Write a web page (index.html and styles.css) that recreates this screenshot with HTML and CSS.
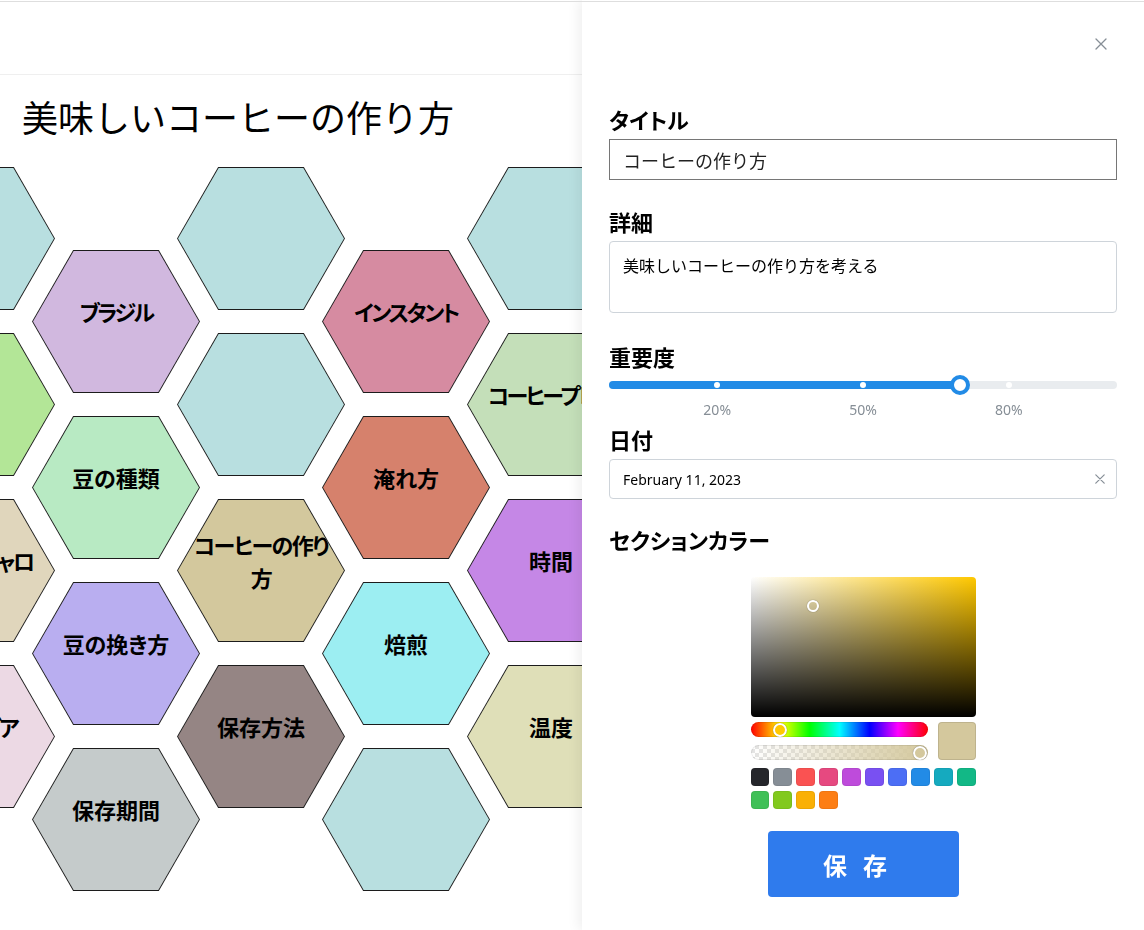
FILE: index.html
```html
<!DOCTYPE html>
<html lang="ja">
<head>
<meta charset="utf-8">
<title>美味しいコーヒーの作り方</title>
<link rel="stylesheet" href="styles.css">
</head>
<body>
<div class="topline"></div>
<div class="app">
  <header class="appbar"></header>
  <main class="board">
    <h1 class="board-title">美味しいコーヒーの作り方</h1>
    <div class="hexgrid">
      <div class="hexcol">
        <div class="hex"><div class="hex-face h-teal"></div></div>
        <div class="hex"><div class="hex-face h-green kana">モカ</div></div>
        <div class="hex"><div class="hex-face h-beige kana">キリマンジャロ</div></div>
        <div class="hex"><div class="hex-face h-pink kana">コロンビア</div></div>
      </div>
      <div class="hexcol shift">
        <div class="hex"><div class="hex-face h-lavender kana">ブラジル</div></div>
        <div class="hex"><div class="hex-face h-mint">豆の種類</div></div>
        <div class="hex"><div class="hex-face h-periwinkle">豆の挽き方</div></div>
        <div class="hex"><div class="hex-face h-gray">保存期間</div></div>
      </div>
      <div class="hexcol">
        <div class="hex"><div class="hex-face h-teal"></div></div>
        <div class="hex"><div class="hex-face h-teal"></div></div>
        <div class="hex"><div class="hex-face h-khaki mixed">コーヒーの作り<br>方</div></div>
        <div class="hex"><div class="hex-face h-taupe">保存方法</div></div>
      </div>
      <div class="hexcol shift">
        <div class="hex"><div class="hex-face h-rose kana">インスタント</div></div>
        <div class="hex"><div class="hex-face h-terracotta">淹れ方</div></div>
        <div class="hex"><div class="hex-face h-cyan">焙煎</div></div>
        <div class="hex"><div class="hex-face h-teal"></div></div>
      </div>
      <div class="hexcol">
        <div class="hex"><div class="hex-face h-teal"></div></div>
        <div class="hex"><div class="hex-face h-sage kana">コーヒープレス</div></div>
        <div class="hex"><div class="hex-face h-purple">時間</div></div>
        <div class="hex"><div class="hex-face h-straw">温度</div></div>
      </div>
    </div>
  </main>
</div>

<aside class="drawer">
  <div class="drawer-head">
    <button class="close-btn" type="button" aria-label="閉じる">
      <svg width="12" height="12" viewBox="0 0 12 12"><path d="M1 1L11 11M11 1L1 11" stroke="#868e96" stroke-width="1.3" stroke-linecap="round" fill="none"/></svg>
    </button>
  </div>

  <div class="field field-title">
    <label class="field-label">タイトル</label>
    <input class="plain-input" type="text" value="コーヒーの作り方">
  </div>

  <div class="field field-desc">
    <label class="field-label">詳細</label>
    <textarea class="textarea">美味しいコーヒーの作り方を考える</textarea>
  </div>

  <div class="field field-importance">
    <label class="field-label">重要度</label>
    <div class="slider">
      <div class="slider-track"></div>
      <div class="slider-fill"></div>
      <span class="slider-mark" style="left:20%"></span>
      <span class="slider-mark" style="left:50%"></span>
      <span class="slider-mark" style="left:80%"></span>
      <span class="slider-thumb" style="left:70%"></span>
    </div>
    <div class="slider-labels">
      <span class="slider-label" style="left:20%">20%</span>
      <span class="slider-label" style="left:50%">50%</span>
      <span class="slider-label" style="left:80%">80%</span>
    </div>
  </div>

  <div class="field field-date">
    <label class="field-label">日付</label>
    <div class="date-wrap">
      <input class="date-input" type="text" value="February 11, 2023">
      <svg class="date-clear" width="10" height="10" viewBox="0 0 10 10"><path d="M0.8 0.8L9.2 9.2M9.2 0.8L0.8 9.2" stroke="#868e96" stroke-width="1.2" stroke-linecap="round" fill="none"/></svg>
    </div>
  </div>

  <div class="field field-color">
    <label class="field-label">セクションカラー</label>
  </div>

  <div class="picker">
    <div class="sat"><span class="sat-thumb"></span></div>
    <div class="picker-row">
      <div class="picker-sliders">
        <div class="hue"><span class="knob knob-hue"></span></div>
        <div class="alpha"><span class="knob knob-alpha"></span></div>
      </div>
      <div class="preview"></div>
    </div>
    <div class="swatches">
      <span class="swatch s-dark"></span>
      <span class="swatch s-gray"></span>
      <span class="swatch s-red"></span>
      <span class="swatch s-pink"></span>
      <span class="swatch s-grape"></span>
      <span class="swatch s-violet"></span>
      <span class="swatch s-indigo"></span>
      <span class="swatch s-blue"></span>
      <span class="swatch s-cyan"></span>
      <span class="swatch s-teal"></span>
      <span class="swatch s-green"></span>
      <span class="swatch s-lime"></span>
      <span class="swatch s-yellow"></span>
      <span class="swatch s-orange"></span>
    </div>
  </div>

  <button class="save-btn" type="button">保存</button>
</aside>
</body>
</html>
```

FILE: styles.css
```css
* { box-sizing: border-box; }

html, body {
  margin: 0;
  height: 100%;
}

body {
  font-family: "Noto Sans", "Noto Sans CJK JP", sans-serif;
  color: #000;
  background: #fff;
  overflow: hidden;
}

.topline {
  position: fixed;
  top: 1px;
  left: 0;
  right: 0;
  height: 1px;
  background: #dedede;
  z-index: 20;
}

.app {
  height: 930px;
  overflow: hidden;
}

.appbar {
  height: 75px;
  border-bottom: 1px solid #efefef;
}

.board-title {
  margin: 15px 0 0;
  padding-left: 22px;
  font: 400 36px/52px "Noto Sans CJK JP", sans-serif;
  color: #000;
}

/* ---------- hex grid ---------- */
.hexgrid {
  display: flex;
  align-items: flex-start;
  margin: 25px 0 0 -113px;
}

.hexcol {
  display: flex;
  flex-direction: column;
  gap: 23px;
  flex-shrink: 0;
}

.hexcol + .hexcol { margin-left: -23px; }

.hexcol.shift { margin-top: 83px; }

.hex {
  width: 168px;
  height: 143px;
  padding: 1px;
  background: #1c1c1c;
  clip-path: polygon(24.5% 0, 75.5% 0, 100% 50%, 75.5% 100%, 24.5% 100%, 0 50%);
}

.hex-face {
  height: 100%;
  clip-path: polygon(24.5% 0, 75.5% 0, 100% 50%, 75.5% 100%, 24.5% 100%, 0 50%);
  display: flex;
  align-items: center;
  justify-content: center;
  padding: 0 10px 20px;
  text-align: center;
  white-space: nowrap;
  font: 700 22px/33px "Noto Sans CJK JP", sans-serif;
  font-feature-settings: "palt";
  color: #000;
}

.hex-face.kana { letter-spacing: -2.5px; }
.hex-face.mixed { letter-spacing: -1.5px; }

.h-teal { background: #b8dfe0; }
.h-green { background: #b3e697; }
.h-beige { background: #e0d6bc; }
.h-pink { background: #ecd9e4; }
.h-lavender { background: #d1b8df; }
.h-mint { background: #b8eac3; }
.h-periwinkle { background: #b9aef0; }
.h-gray { background: #c5cbcb; }
.h-khaki { background: #d3c89d; }
.h-taupe { background: #958584; }
.h-rose { background: #d68ba1; }
.h-terracotta { background: #d6816c; }
.h-cyan { background: #9ceef2; }
.h-sage { background: #c4dfb9; }
.h-purple { background: #c587e6; }
.h-straw { background: #dfdfb8; }

/* ---------- drawer ---------- */
.drawer {
  position: fixed;
  top: 0;
  right: 0;
  width: 562px;
  height: 100%;
  background: #fff;
  box-shadow: -3px 0 12px rgba(0, 0, 0, 0.07);
  padding: 28px 27px 0;
  display: flex;
  flex-direction: column;
  z-index: 10;
}

.drawer-head {
  display: flex;
  justify-content: flex-end;
  height: 32px;
}

.close-btn {
  width: 32px;
  height: 32px;
  padding: 0;
  border: 0;
  background: none;
  display: flex;
  align-items: center;
  justify-content: center;
}

.field { display: flex; flex-direction: column; }

.field-label {
  display: block;
  margin: 0 0 5px;
  font: 700 22px/30px "Noto Sans CJK JP", sans-serif;
  font-feature-settings: "palt";
  color: #000;
}

.field-title { margin-top: 44px; }
.field-desc { margin-top: 26px; }
.field-importance { margin-top: 28px; }
.field-importance .field-label { margin: 0; }
.field-date { margin-top: 4px; }
.field-color { margin-top: 25px; }
.field-color .field-label { margin: 0; }

.plain-input {
  height: 41px;
  width: 100%;
  margin: 0;
  border: 1px solid #767676;
  border-radius: 0;
  padding: 0 13px;
  font: 400 18px "Noto Sans CJK JP", sans-serif;
  color: #222;
  background: #fff;
  outline: none;
}

.textarea {
  display: block;
  height: 72px;
  width: 100%;
  margin: 0;
  border: 1px solid #ced4da;
  border-radius: 4px;
  padding: 11px 13px;
  font: 400 16px/1.55 "Noto Sans CJK JP", sans-serif;
  color: #000;
  resize: none;
  outline: none;
}

/* slider */
.slider {
  position: relative;
  height: 28px;
  margin: 0 11px;
}

.slider-track {
  position: absolute;
  top: 10px;
  left: -11px;
  right: -11px;
  height: 8px;
  border-radius: 4px;
  background: #e9ecef;
}

.slider-fill {
  position: absolute;
  top: 10px;
  left: -11px;
  width: calc(70% + 11px);
  height: 8px;
  border-radius: 4px 0 0 4px;
  background: #228be6;
}

.slider-mark {
  position: absolute;
  top: 11px;
  width: 6px;
  height: 6px;
  margin-left: -3px;
  border-radius: 50%;
  background: #fff;
}

.slider-thumb {
  position: absolute;
  top: 4px;
  width: 20px;
  height: 20px;
  margin-left: -10px;
  border: 4px solid #228be6;
  border-radius: 50%;
  background: #fff;
}

.slider-labels {
  position: relative;
  height: 20px;
  margin: 1px 11px 0;
}

.slider-label {
  position: absolute;
  top: 0;
  transform: translateX(-50%);
  font: 400 14px/20px "Noto Sans", sans-serif;
  color: #868e96;
}

/* date */
.date-wrap { position: relative; }

.date-input {
  display: block;
  width: 100%;
  height: 40px;
  margin: 0;
  border: 1px solid #ced4da;
  border-radius: 4px;
  padding: 0 13px;
  font: 400 14px "Noto Sans", sans-serif;
  color: #000;
  outline: none;
}

.date-clear {
  position: absolute;
  right: 12px;
  top: 15px;
}

/* color picker */
.picker {
  width: 225px;
  align-self: center;
  margin-top: 23px;
}

.sat {
  position: relative;
  height: 140px;
  border-radius: 4px;
  background:
    linear-gradient(to top, #000, rgba(0, 0, 0, 0)),
    linear-gradient(to right, #fff, #ffc800);
}

.sat-thumb {
  position: absolute;
  left: 56px;
  top: 23px;
  width: 12px;
  height: 12px;
  border: 2px solid #fff;
  border-radius: 50%;
  box-shadow: 0 0 1px rgba(0, 0, 0, 0.6);
}

.picker-row {
  display: flex;
  gap: 10px;
  margin-top: 5px;
}

.picker-sliders {
  flex: 1;
  display: flex;
  flex-direction: column;
  gap: 8px;
}

.hue,
.alpha {
  position: relative;
  height: 15px;
  border-radius: 8px;
  box-shadow: inset 0 0 0 1px rgba(0, 0, 0, 0.08);
}

.hue {
  background: linear-gradient(to right, #f00 0%, #ff0 17%, #0f0 33%, #0ff 50%, #00f 67%, #f0f 83%, #f00 100%);
}

.alpha {
  background:
    linear-gradient(to right, rgba(212, 200, 157, 0), #d4c89d),
    repeating-conic-gradient(#e4e4e4 0 25%, #fff 0 50%) 0 0 / 8px 8px;
}

.knob {
  position: absolute;
  top: 0.5px;
  width: 14px;
  height: 14px;
  border: 2px solid #fff;
  border-radius: 50%;
  box-shadow: 0 0 1px rgba(0, 0, 0, 0.6);
}

.knob-hue { left: 22px; background: #ffc800; }
.knob-alpha { right: 1px; background: #d4c89d; }

.preview {
  width: 38px;
  height: 38px;
  border-radius: 4px;
  background: #d4c89d;
  box-shadow: inset 0 0 0 1px rgba(0, 0, 0, 0.1);
}

.swatches {
  display: grid;
  grid-template-columns: repeat(10, 1fr);
  gap: 4.5px;
  margin-top: 8px;
}

.swatch {
  aspect-ratio: 1;
  border-radius: 4px;
  box-shadow: inset 0 0 0 1px rgba(0, 0, 0, 0.06);
}

.s-dark { background: #25262b; }
.s-gray { background: #868e96; }
.s-red { background: #fa5252; }
.s-pink { background: #e64980; }
.s-grape { background: #be4bdb; }
.s-violet { background: #7950f2; }
.s-indigo { background: #4c6ef5; }
.s-blue { background: #228be6; }
.s-cyan { background: #15aabf; }
.s-teal { background: #12b886; }
.s-green { background: #40c057; }
.s-lime { background: #82c91e; }
.s-yellow { background: #fab005; }
.s-orange { background: #fd7e14; }

.save-btn {
  align-self: center;
  width: 191px;
  height: 66px;
  margin-top: 22px;
  padding: 0;
  border: 0;
  border-radius: 4px;
  background: #2f7bed;
  color: #fff;
  font: 700 24px "Noto Sans CJK JP", sans-serif;
  letter-spacing: 16px;
}
```
